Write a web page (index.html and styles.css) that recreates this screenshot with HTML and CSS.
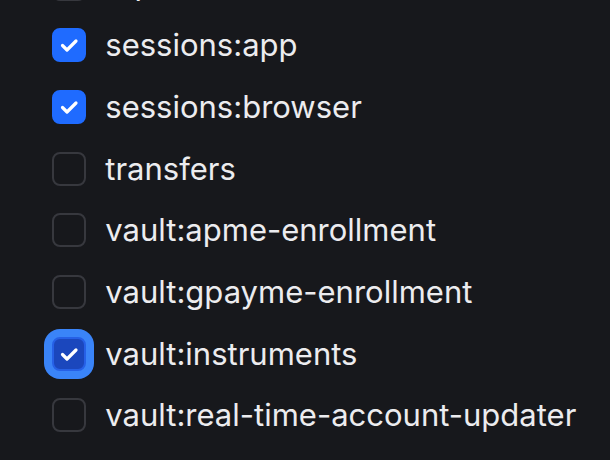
FILE: index.html
```html
<!DOCTYPE html>
<html>
<head>
<meta charset="utf-8">
<link rel="stylesheet" href="styles.css">
</head>
<body>
<ul class="list">
  <li class="row"><span class="box"></span><span class="label">reports</span></li>
  <li class="row"><span class="box checked"><svg viewBox="0 0 34 34"><polyline points="10.5,17.5 15,22 24,13"/></svg></span><span class="label">sessions:app</span></li>
  <li class="row"><span class="box checked"><svg viewBox="0 0 34 34"><polyline points="10.5,17.5 15,22 24,13"/></svg></span><span class="label">sessions:browser</span></li>
  <li class="row"><span class="box"></span><span class="label">transfers</span></li>
  <li class="row"><span class="box"></span><span class="label">vault:apme-enrollment</span></li>
  <li class="row"><span class="box"></span><span class="label">vault:gpayme-enrollment</span></li>
  <li class="row"><span class="box checked focused"><svg viewBox="0 0 34 34"><polyline points="10.5,17.5 15,22 24,13"/></svg></span><span class="label">vault:instruments</span></li>
  <li class="row"><span class="box"></span><span class="label">vault:real-time-account-updater</span></li>
</ul>
</body>
</html>
```
FILE: styles.css
```css
html, body {
  margin: 0;
  padding: 0;
  background: #17181c;
  height: 100%;
  overflow: hidden;
}
.list {
  list-style: none;
  margin: -33.4px 0 0 0;
  padding: 0 0 0 52.3px;
  display: flex;
  flex-direction: column;
  gap: 27.7px;
  font-family: Inter, "Noto Sans", sans-serif;
}
.row {
  display: flex;
  align-items: center;
  gap: 19px;
  height: 34px;
}
.box {
  box-sizing: border-box;
  width: 34px;
  height: 34px;
  flex: none;
  border-radius: 8px;
  border: 2px solid #37383e;
  display: flex;
  align-items: center;
  justify-content: center;
}
.box.checked {
  background: #1f6bff;
  border-color: #1f6bff;
}
.box.focused {
  background: #1b47bd;
  border-color: #2660e6;
  box-shadow: 0 0 0 8px #3a84f8;
}
.box svg {
  width: 34px;
  height: 34px;
  flex: none;
  margin: -2px;
}
.box polyline {
  fill: none;
  stroke: #ffffff;
  stroke-width: 3.2;
  stroke-linecap: round;
  stroke-linejoin: round;
}
.label {
  color: #ececef;
  font-size: 31px;
  line-height: 34px;
  white-space: nowrap;
  letter-spacing: 0;
}
```
